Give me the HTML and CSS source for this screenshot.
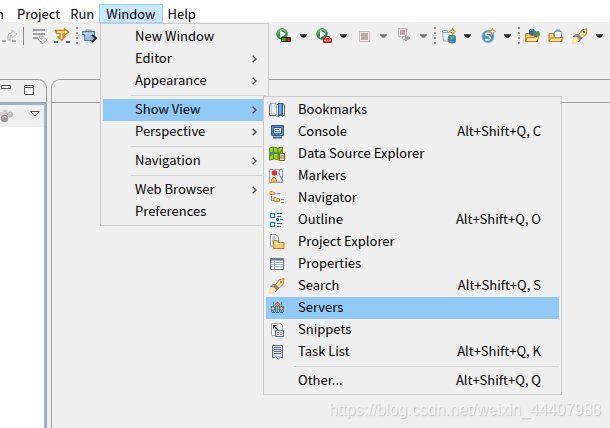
FILE: index.html
```html
<!DOCTYPE html>
<html lang="en">
<head>
<meta charset="utf-8">
<title>Workbench</title>
<link rel="stylesheet" href="styles.css">
</head>
<body>
<svg class="defs" aria-hidden="true">
  <symbol id="down" viewBox="0 0 8 4"><path d="M0 0h8v1L5 4H3L0 1z"/></symbol>
  <symbol id="chev" viewBox="0 0 5 8"><path d="M.7.7 4 4 .7 7.3" fill="none" stroke="#444" stroke-width="1.3"/></symbol>
  <symbol id="play" viewBox="0 0 16 16"><circle cx="6" cy="6" r="5.300" fill="#328a45" stroke="#3f8f55"/><path d="M1.500 6a5 5 0 0 1 9-2" fill="none" stroke="#73b77b" stroke-width="1.500"/><path d="M4 2v8l6-4z" fill="#fff"/></symbol>
  <symbol id="rocket" viewBox="0 0 16 16"><path d="M6 7.500 10 2l5-1.500L14.500 6 9 11z" fill="#f2ce8c" stroke="#c88b35"/><path d="m8 7 4-4" stroke="#fff0c9" stroke-width="1.500"/><circle cx="12" cy="4" r="1" fill="#517daf"/><path d="M1 8.500 5 6l5 4-3.500 4L5 10z" fill="#8b8987" stroke="#77716a" stroke-width=".7"/><path d="m0 15 1.500-5 3-1L7 12l-3 3z" fill="#fff0a0" stroke="#f6d57a" stroke-width=".6"/></symbol>
  <symbol id="spark" viewBox="0 0 7 7"><path d="m3.500.3 1 2.200 2.200 1-2.200 1-1 2.200-1-2.200-2.200-1 2.200-1z" fill="#fff6cf" stroke="#bd8b1d" stroke-width=".9"/></symbol>
</svg>

<nav class="menubar">
  <button class="cut">n</button><button>Project</button><button>Run</button><button class="open" aria-expanded="true">Window</button><button>Help</button>
</nav>

<div class="toolbar">
  <div class="tools">
    <button aria-label="Step"><svg viewBox="0 0 16 16"><path d="M7 12V8q0-3 3-3h1V2l5 4-5 4V7q-2 0-2 2v3z" fill="#eee" stroke="#b7b7b7"/><path d="M1 13h4m6 0h4" stroke="#aaa" stroke-width="2"/></svg></button>
    <i class="bar"></i>
    <button aria-label="Skip lines"><svg viewBox="0 0 16 16"><path d="M1 2h12M1 6h12M1 10h7" stroke="#a3a3a3" stroke-width="2"/><path d="M7 7q0 4 3 4V8l5 4-5 4v-2q-4 0-4-4" fill="#eee" stroke="#aaa"/></svg></button>
    <button aria-label="Step filters"><svg viewBox="0 0 16 16"><path d="M1.500 2.500h9V.8L14.500 4l-4 3.200V5.500H9V9h2l-3.500 3.500L4 9h2V5.500H3z" fill="#ffe9a8" stroke="#c88614" stroke-width="1.300"/><path d="M0 14h4m8 0h4" stroke="#49699e" stroke-width="2"/></svg></button>
    <i class="dots"></i>
    <button aria-label="Open task"><svg viewBox="0 0 16 16"><path d="M4 4V2h5v2" fill="#eee3bd" stroke="#a5935d"/><path d="M.5 3.500h12v9h-10v-6h-2z" fill="#9bbce6" stroke="#5878a9"/><path d="M3 6h9" stroke="#d6e8fc"/><path d="m10 7 4 3-4 4" fill="none" stroke="#222" stroke-width="2"/></svg></button>
  </div>
  <div class="tools launch">
    <button aria-label="Coverage"><svg viewBox="0 0 16 16"><use href="#play"/><path d="M5.500 9.500h9v4h-9z" fill="#d00000" stroke="#111"/><path d="M6 10h4v3H6z" fill="#00c510"/></svg></button>
    <button class="arrow" aria-label="Coverage menu"><svg><use href="#down"/></svg></button>
    <button aria-label="External tools"><svg viewBox="0 0 16 16"><use href="#play"/><path d="M9.500 10V8.500h4V10" fill="none" stroke="#b51515"/><path d="M7.500 10.500h8v4h-8z" fill="#ef5048" stroke="#b51515"/><path d="M8 12.500h2m1 0h1m1 0h2" stroke="#ffc4ba"/></svg></button>
    <button class="arrow" aria-label="External tools menu"><svg><use href="#down"/></svg></button>
    <button aria-label="Stop" disabled><svg viewBox="0 0 16 16"><path d="M3.500 3.500h10v10h-10z" fill="#f3eaea" stroke="#c6bcbc"/><path d="M5 5h7v7H5z" fill="#bfaaaa"/></svg></button>
    <button class="arrow off" aria-label="Stop menu"><svg><use href="#down"/></svg></button>
    <button aria-label="Relaunch" disabled><svg viewBox="0 0 16 16"><path d="M2.500.5h8v8h-8z" fill="#eee3e3" stroke="#bbb"/><path d="M4 2h5v5H4z" fill="#bea7aa"/><path d="M9.500 7v6l4.500-3z" fill="#aaa" stroke="#999"/><path d="M6.500 9v2.500h3" fill="none" stroke="#bbb"/></svg></button>
    <button class="arrow off" aria-label="Relaunch menu"><svg><use href="#down"/></svg></button>
    <i class="dots"></i>
    <button aria-label="New web project"><svg viewBox="0 0 16 16"><path d="M2.500 4.500h10v8.500h-9z" fill="#e3effa" stroke="#a9a77f"/><path d="M2.500 2.500h5v2h-5z" fill="#fff" stroke="#8ea6be"/><circle cx="12" cy="11" r="4" fill="#397eb8" stroke="#5d86b0"/><path d="m10 9 3-1 1 2-3 3z" fill="#65b257"/><use href="#spark" x="9" y="0" width="7" height="7"/></svg></button>
    <button class="arrow" aria-label="New web project menu"><svg><use href="#down"/></svg></button>
    <button aria-label="New service"><svg viewBox="0 0 16 16"><circle cx="8" cy="8.500" r="6" fill="#488fc9" stroke="#7fb0da"/><path d="M11 5.500Q5 4 6 7q4 1 4.500 3Q10 13 5 11.500" fill="none" stroke="#fff" stroke-width="1.500"/><use href="#spark" x="9" y="0" width="7" height="7"/></svg></button>
    <button class="arrow" aria-label="New service menu"><svg><use href="#down"/></svg></button>
    <i class="dots"></i>
    <button aria-label="Open type"><svg viewBox="0 0 16 16"><path d="M1.500 13.500v-8h4l1 2h7v6z" fill="#f4cd78" stroke="#b87924"/><circle cx="8" cy="4" r="3.300" fill="#4861a1"/><circle cx="12.500" cy="6" r="3.300" fill="#3f9258"/><path d="M6 3q1-2 3-1m3 2q1-1 2 0" fill="none" stroke="#99b6d5"/><path d="m2 13.500 1-4h8l4-1-2 5z" fill="#fde2a0" stroke="#c5832d"/></svg></button>
    <button class="gap" aria-label="Open resource"><svg viewBox="0 0 16 16"><path d="M1 13.500V5.500h5v3h8v5z" fill="#f4cd78" stroke="#b87924"/><path d="M6.500 3.500h7v6h-7z" fill="#f7faff" stroke="#7897c4"/><path d="M8 3.500V2h4v1.500" fill="#a5b6ce" stroke="#7f91ac"/><path d="m1 13.500 2-3.500h8l4-1-2 4.500z" fill="#fde2a0" stroke="#c5832d"/></svg></button>
    <button class="gap" aria-label="Search"><svg viewBox="0 0 16 16"><use href="#rocket"/></svg></button>
    <button class="arrow" aria-label="Search menu"><svg><use href="#down"/></svg></button>
  </div>
</div>

<main class="workbench">
  <section class="view">
    <div class="tabs">
      <button aria-label="Minimize"><svg viewBox="0 0 12 12"><path d="M1.500 1.500h9v3h-9z" fill="#fff" stroke="#555"/></svg></button>
      <button aria-label="Maximize"><svg viewBox="0 0 12 12"><path d="M1.500 1.500h9v9h-9zM1.500 3.500h9" fill="#fff" stroke="#555"/></svg></button>
    </div>
    <div class="viewbody">
      <div class="viewtools">
        <button aria-label="Working sets"><svg viewBox="0 0 16 16"><circle cx="5" cy="4" r="2.500" fill="#ccc"/><circle cx="10" cy="6.500" r="3" fill="#bbb"/><circle cx="1.500" cy="6" r="2" fill="#d8c8c5"/><circle cx="4.500" cy="10.500" r="3.800" fill="#999"/><path d="M2.500 9.500q2-2 4 0M8.500 6q1.500-2 3 0" fill="none" stroke="#ddd"/></svg></button>
        <button class="viewmenu" aria-label="View menu"><svg viewBox="0 0 10 6"><path d="M.5.5h9L5 5z" fill="#fff" stroke="#555"/></svg></button>
      </div>
    </div>
  </section>
  <section class="editor"><div class="tabs"></div></section>
</main>

<div class="menu window-menu" role="menu">
  <button role="menuitem"><span>New Window</span></button>
  <button role="menuitem"><span>Editor</span><svg class="chev"><use href="#chev"/></svg></button>
  <button role="menuitem"><span>Appearance</span><svg class="chev"><use href="#chev"/></svg></button>
  <hr>
  <button role="menuitem" class="on"><span>Show View</span><svg class="chev"><use href="#chev"/></svg></button>
  <button role="menuitem"><span>Perspective</span><svg class="chev"><use href="#chev"/></svg></button>
  <hr>
  <button role="menuitem"><span>Navigation</span><svg class="chev"><use href="#chev"/></svg></button>
  <hr>
  <button role="menuitem"><span>Web Browser</span><svg class="chev"><use href="#chev"/></svg></button>
  <button role="menuitem"><span>Preferences</span></button>
</div>

<div class="menu view-menu" role="menu">
  <button role="menuitem"><svg viewBox="0 0 16 16"><path d="M.5 2.500 2 1.500h4l2 1 2-1h4l1.500 1V13.500H9l-1 1-1-1H.5z" fill="#f3f6fa" stroke="#79674e"/><path d="M2 1.500h4L7.500 3v10L6 12H2z" fill="#eaf1f8" stroke="#a9b4c2"/><path d="M9.500 1.500h4v13l-2-2-2 2z" fill="#488ed1" stroke="#285f9b"/><path d="M11 2v10" stroke="#a9d2f3"/></svg><span>Bookmarks</span></button>
  <button role="menuitem"><svg viewBox="0 0 16 16"><path d="M2.500 1.500h12v10h-12z" fill="#5b88bd" stroke="#315b8f"/><path d="M4.500 3.500h8v6h-8z" fill="#eaf3fc" stroke="#315b8f"/><path d="M6 5.500h4M6 7.500h5" stroke="#486a92"/><path d="M4 13.500h9" stroke="#416b9e" stroke-width="2"/></svg><span>Console</span><kbd>Alt+Shift+Q, C</kbd></button>
  <button role="menuitem"><svg viewBox="0 0 16 16"><path d="m.5 2 4-1 4 1 5-1v12l-4 1-4-1-5 1z" fill="#a9d31f" stroke="#628b19"/><path d="M4.500 1v12M9 2v11M1 10l4-4 5 2 3-4" fill="none" stroke="#4f862a" stroke-width="1.300"/><path d="M1 7h6" stroke="#2e8c99" stroke-width="2"/><path d="M10.500 7.500h5v7h-5z" fill="#f4dfad" stroke="#7c6337"/><path d="M11 10h4m-4 2h4" stroke="#8b754c"/></svg><span>Data Source Explorer</span></button>
  <button role="menuitem"><svg viewBox="0 0 16 16"><path d="M.5 1.500h13v13H.5z" fill="#e5effb" stroke="#a9a495"/><path d="M11 1q-2 4 0 7t3 6H9" fill="#f9fbfe" stroke="#7389aa"/><circle cx="5.500" cy="5" r="2.800" fill="#e52e35"/><path d="m5 9 2 2 1 3H2l1-3z" fill="#f8bd4d" stroke="#cf8f35"/></svg><span>Markers</span></button>
  <button role="menuitem"><svg viewBox="0 0 16 16"><path d="M1 4.500V1.500h2l1 1h2v2zM5 11.500V7.500h2l1 1h2.500v3z" fill="#ffe4a6" stroke="#c58b3b"/><path d="M2.500 6v4.500H5M7.500 3.500h4M12 9.500h3M12 12.500h3" fill="none" stroke="#7892b0"/></svg><span>Navigator</span></button>
  <button role="menuitem"><svg viewBox="0 0 16 16"><path d="M1.500 1.500h4v4h-4zM1.500 10.500h4v4h-4z" fill="#eef7ff" stroke="#1c6db5" stroke-width="1.200"/><path d="M8 1.500h5M8 4.500h4M11 7.500h3M8 11.500h5M8 14.500h4" stroke="#1c6db5"/><path d="M7.500 6.500h2v2h-2z" fill="#fff" stroke="#1c6db5"/></svg><span>Outline</span><kbd>Alt+Shift+Q, O</kbd></button>
  <button role="menuitem"><svg viewBox="0 0 16 16"><path d="M1.500.5H7L9.500 3v9h-8z" fill="#f7fafe" stroke="#9a9a90"/><path d="M3 3h3M3 5h4M3 7h3" stroke="#8eaaca"/><path d="M4.500 14.500v-8h4l1 2h5.500v6z" fill="#f6cf75" stroke="#bd842e"/><path d="M5 9.500h9" stroke="#fff0b9"/></svg><span>Project Explorer</span></button>
  <button role="menuitem"><svg viewBox="0 0 16 16"><path d="M1.500 2.500h13v11h-13z" fill="#f8fbff" stroke="#69758c"/><path d="M1 3.500h14" stroke="#68799b" stroke-width="2"/><path d="M5.500 4v9M2 6.500h12M2 8.500h12M2 10.500h12" stroke="#a8b8cf"/></svg><span>Properties</span></button>
  <button role="menuitem"><svg viewBox="0 0 16 16"><use href="#rocket"/></svg><span>Search</span><kbd>Alt+Shift+Q, S</kbd></button>
  <button role="menuitem" class="on"><svg viewBox="0 0 16 16"><path d="M4.500 2v11M8.500 2v11M12.500 2v11M2.500 6v6M6.500 6v6M10.500 6v6M14.500 6v6" fill="none" stroke="#4f7198"/><circle cx="4" cy="8.500" r="1.800" fill="#d8e77b" stroke="#56723e"/><circle cx="8.500" cy="4.500" r="1.800" fill="#f39b65" stroke="#a7462f"/><circle cx="12.500" cy="8.500" r="1.800" fill="#e7cc54" stroke="#775d3b"/><path d="M3 12.500h3m1 0h3m1 0h3" stroke="#315c8b"/></svg><span>Servers</span></button>
  <button role="menuitem"><svg viewBox="0 0 16 16"><path d="M2.500 1.500h9l2 2v10h-11z" fill="#f6f7fa" stroke="#a2a6ad"/><path d="M4.500 6.500v-3h3M5 4l4 4" fill="none" stroke="#222" stroke-width="1.200"/><path d="M6.500 8.500h8v6h-8z" fill="#e8f0fb" stroke="#536f9a"/><path d="M8 10.500h2m1 0h2m-5 2h2m1 0h2" stroke="#bc5e69"/></svg><span>Snippets</span></button>
  <button role="menuitem"><svg viewBox="0 0 16 16"><path d="M3.500 1.500h10V14l-2-1-2 2-3-2-3 1z" fill="#e0e3f2" stroke="#666b7b"/><path d="M5 3.500h7M5 5.500h7M5 7.500h7M5 9.500h7" stroke="#666b78"/><path d="M4 12q3 0 5 2l4-2" fill="#abb8e1"/></svg><span>Task List</span><kbd>Alt+Shift+Q, K</kbd></button>
  <hr>
  <button role="menuitem"><span class="noicon">Other...</span><kbd>Alt+Shift+Q, Q</kbd></button>
</div>
<div class="watermark">https://blog.csdn.net/weixin_44407988</div>
</body>
</html>
```
FILE: styles.css
```css
* { box-sizing: border-box; }
body { margin: 0; height: 100vh; overflow: hidden; display: flex; flex-direction: column; background: #f0f0f0; color: #000; font: 13px/18px "Noto Sans CJK SC", "Noto Sans", sans-serif; }
button { font: inherit; color: inherit; background: none; border: 0; padding: 0; margin: 0; display: flex; align-items: center; }
svg { display: block; width: 16px; height: 16px; flex: none; }
.defs { position: absolute; width: 0; height: 0; }

.menubar { display: flex; height: 23px; padding-top: 4px; background: linear-gradient(#fff 22px, #f0f0f0 22px); flex: none; }
.menubar button { height: 19px; padding: 0 5px; flex: none; }
.menubar .cut { width: 12px; padding: 0; justify-content: flex-start; text-indent: -4px; }
.menubar .open { background: #cce8ff; border: 1px solid #99d1ff; padding: 0 6px; }

.toolbar { display: flex; height: 56px; flex: none; }
.tools { display: flex; align-items: center; height: 25px; padding-left: 1px; flex: none; gap: 6px; }
.launch { gap: 0; padding-left: 0; margin-left: 178px; }
.bar { width: 1px; height: 18px; background: #8a8a94; margin-right: 2px; }
.dots { width: 2px; height: 17px; margin-right: -2px; background: repeating-linear-gradient(#9c9c8c 0 2px, transparent 2px 5px); }
.launch .dots { margin: 0 4px 0 -2px; }
.arrow { padding: 0 9px 0 8px; }
.arrow svg { width: 7px; height: 4px; fill: #222; }
.off svg { fill: #777; }
.gap { margin-left: 8px; }

.workbench { display: flex; flex: 1; gap: 4px; }
.view { width: 47px; display: flex; flex-direction: column; border: 1px solid #a0a0a0; border-width: 1px 1px 0 0; border-top-right-radius: 9px; }
.tabs { display: flex; height: 23px; padding-bottom: 2px; border-bottom: 1px solid #a0a0a0; gap: 11px; align-items: center; flex: none; }
.tabs svg { width: 12px; height: 12px; }
.viewbody { flex: 1; border: solid #99b4d1; border-width: 2px 2px 0 0; background: #fff; }
.viewtools { display: flex; height: 22px; justify-content: space-between; align-items: center; background: #f0f0f0; padding: 0 4px 0 0; }
.viewmenu svg { width: 10px; height: 6px; }
.viewmenu { padding-bottom: 4px; }
.editor { flex: 1; border: 1px solid #a0a0a0; border-width: 1px 0 0 1px; border-top-left-radius: 9px; }

.menu { position: absolute; padding: 2px; border: 1px solid #ccc; background: #f0f0f0; }
.menu button { width: 100%; height: 22px; text-align: left; }
.menu span, .menu kbd { padding-bottom: 2px; }
.menu .on { background: #91c9f7; }
.menu hr { height: 1px; margin: 3px 0 3px 28px; border: 0; background: #d4d4d4; }
.window-menu { left: 100px; top: 23px; width: 169px; }
.window-menu button { padding: 0 9px 0 32px; justify-content: space-between; }
.chev { width: 5px; height: 8px; }
.view-menu { left: 263px; top: 96px; width: 299px; }
.view-menu button { padding: 0 18px 0 3px; gap: 13px; }
.view-menu .noicon { padding-left: 29px; }
kbd { font: inherit; margin-left: auto; }
.watermark { position: absolute; right: 9px; bottom: 8px; font: 16px/20px "Liberation Sans", sans-serif; color: #f2f2f2; text-shadow: 1px 1px 1px #c4c4c4; }
```
